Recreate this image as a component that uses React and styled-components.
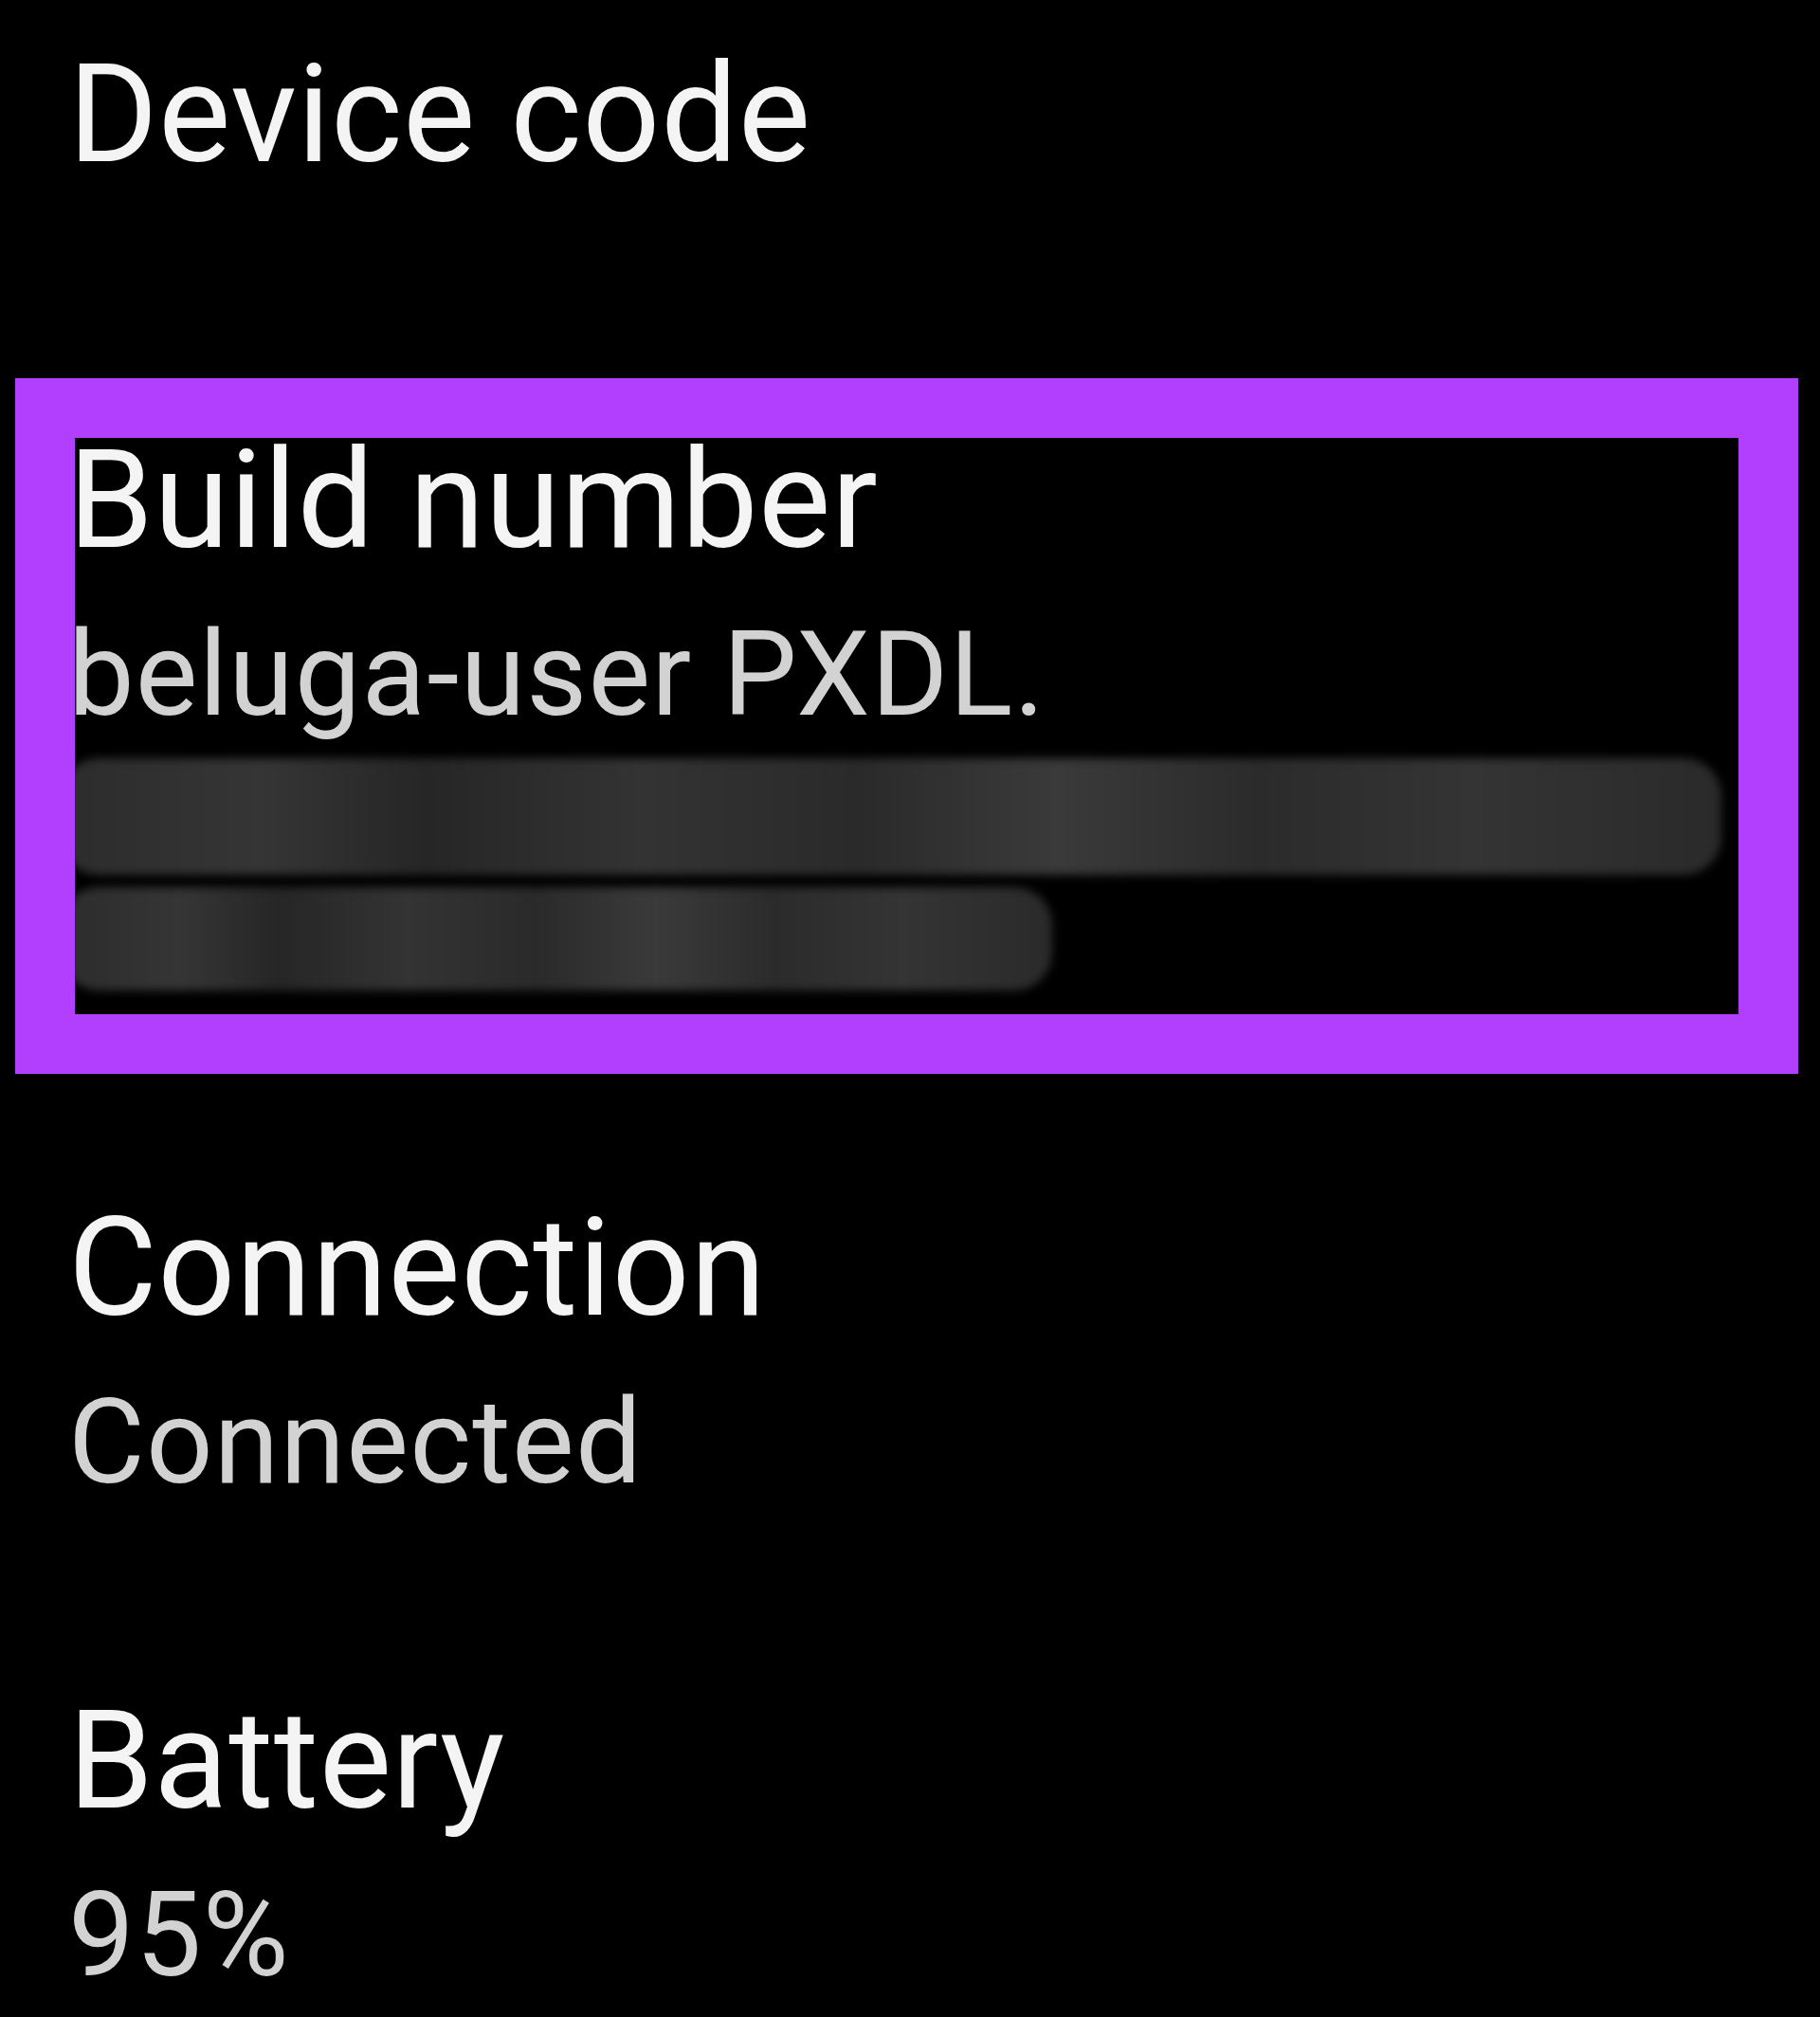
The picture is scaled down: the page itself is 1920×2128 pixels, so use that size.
import React from "react";
import styled, { createGlobalStyle } from "styled-components";

const GlobalStyle = createGlobalStyle`
  html, body {
    margin: 0;
    padding: 0;
    background: #000;
  }
  body {
    font-family: Roboto, "Noto Sans", "Liberation Sans", sans-serif;
    -webkit-font-smoothing: antialiased;
  }
`;

const Screen = styled.div`
  width: 1920px;
  height: 2128px;
  overflow: hidden;
  background: #000;
  padding-top: 31px;
  box-sizing: border-box;
`;

const Item = styled.div`
  position: relative;
  padding: ${(p) => (p.$first ? "0" : "88px")} 0 ${(p) => (p.$bare ? "139px" : "88px")} 72px;
`;

const Title = styled.div`
  font-size: 144px;
  line-height: 180px;
  letter-spacing: 0.6px;
  color: #f4f4f4;
  white-space: nowrap;
`;

const Value = styled.div`
  margin-top: 24px;
  font-size: 124px;
  line-height: 140px;
  letter-spacing: 1.2px;
  color: #d2d2d2;
  white-space: nowrap;
`;

const Redacted = styled.div`
  display: flex;
  flex-direction: column;
  gap: 13px;
  margin: 18px 0 27px -8px;
`;

const Bar = styled.div`
  height: ${(p) => p.$h}px;
  width: ${(p) => p.$w}px;
  border-radius: 40px;
  background: linear-gradient(
    90deg,
    #2c2c2c 0%,
    #353535 12%,
    #262626 22%,
    #333333 35%,
    #2a2a2a 48%,
    #3a3a3a 60%,
    #2b2b2b 72%,
    #343434 85%,
    #2a2a2a 100%
  );
  filter: blur(5px);
`;

const Highlight = styled.div`
  position: absolute;
  top: 49px;
  left: 16px;
  right: 23px;
  bottom: 27px;
  border: 63px solid #b23ffd;
  pointer-events: none;
`;

const items = [
  { title: "Device code" },
  {
    title: "Build number",
    value: "beluga-user PXDL.",
    redacted: [
      { w: 1752, h: 123 },
      { w: 1046, h: 109 },
    ],
    highlight: true,
  },
  { title: "Connection", value: "Connected" },
  { title: "Battery", value: "95%" },
];

export default function App() {
  return (
    <>
      <GlobalStyle />
      <Screen>
        {items.map((it, i) => (
          <Item key={it.title} $first={i === 0} $bare={!it.value}>
            <Title>{it.title}</Title>
            {it.value && <Value>{it.value}</Value>}
            {it.redacted && (
              <Redacted>
                {it.redacted.map((b, j) => (
                  <Bar key={j} $w={b.w} $h={b.h} />
                ))}
              </Redacted>
            )}
            {it.highlight && <Highlight />}
          </Item>
        ))}
      </Screen>
    </>
  );
}
